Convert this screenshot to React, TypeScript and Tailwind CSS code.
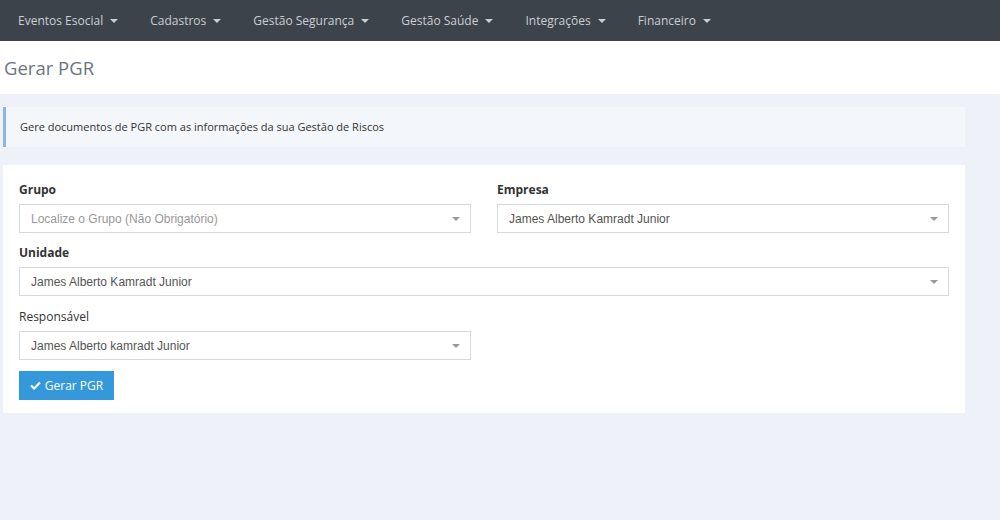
const menus = [
  'Eventos Esocial',
  'Cadastros',
  'Gestão Segurança',
  'Gestão Saúde',
  'Integrações',
  'Financeiro',
]

function Caret() {
  return (
    <span className="inline-block ml-[7px] w-0 h-0 border-l-[4px] border-r-[4px] border-t-[4px] border-l-transparent border-r-transparent border-t-[#c9ced4] align-middle" />
  )
}

function SelectBox({ value, placeholder }: { value?: string; placeholder?: string }) {
  return (
    <div className="flex items-center justify-between h-[29px] border border-[#d5d9de] bg-white pl-[11px] pr-[10px] font-['Liberation_Sans',Arial,sans-serif] text-[12px]">
      <span className={value ? 'text-[#555]' : 'text-[#999]'}>{value ?? placeholder}</span>
      <span className="w-0 h-0 border-l-[4px] border-r-[4px] border-t-[4px] border-l-transparent border-r-transparent border-t-[#999]" />
    </div>
  )
}

function Field({
  label,
  bold = true,
  children,
}: {
  label: string
  bold?: boolean
  children: React.ReactNode
}) {
  return (
    <div>
      <div className={`text-[12px] text-[#333] mb-[5px] leading-[18px] ${bold ? 'font-bold' : 'font-normal'}`}>
        {label}
      </div>
      {children}
    </div>
  )
}

export default function App() {
  return (
    <div className="w-[1000px] h-[520px] overflow-hidden bg-[#eef2f8] font-['Open_Sans',sans-serif]">
      <nav className="h-[41px] bg-[#3d434b] flex items-center pl-[18px] text-[12px] text-[#c9ced4]">
        {menus.map((m, i) => (
          <div key={m} className={`flex items-center ${i < menus.length - 1 ? 'mr-[32px]' : ''}`}>
            {m}
            <Caret />
          </div>
        ))}
      </nav>

      <div className="h-[53px] bg-white flex items-center pl-[4px]">
        <h1 className="text-[18.5px] text-[#6b7580] font-normal">Gerar PGR</h1>
      </div>

      <div className="pl-[3px] pr-[35px] pt-[13px]">
        <div className="h-[40px] flex items-center bg-[#f3f6fa] border-l-[3px] border-[#8bb6e0] pl-[14px] text-[11px] text-[#333]">
          Gere documentos de PGR com as informações da sua Gestão de Riscos
        </div>

        <div className="mt-[18px] bg-white pl-[16px] pr-[16px] pt-[16px] pb-[13px]">
          <div className="grid grid-cols-2 gap-x-[26px]">
            <Field label="Grupo">
              <SelectBox placeholder="Localize o Grupo (Não Obrigatório)" />
            </Field>
            <Field label="Empresa">
              <SelectBox value="James Alberto Kamradt Junior" />
            </Field>
          </div>
          <div className="mt-[11px]">
            <Field label="Unidade">
              <SelectBox value="James Alberto Kamradt Junior" />
            </Field>
          </div>
          <div className="mt-[12px] grid grid-cols-2 gap-x-[26px]">
            <Field label="Responsável" bold={false}>
              <SelectBox value="James Alberto kamradt Junior" />
            </Field>
          </div>
          <button
            type="button"
            className="mt-[11px] h-[29px] w-[95px] flex items-center justify-center gap-[4px] bg-[#3498db] text-white text-[12px]"
          >
            <svg width="11" height="10" viewBox="0 0 12 10" fill="white">
              <path d="M0.3 5.2 L2 3.5 L4.5 6 L10 0.4 L11.7 2.1 L4.5 9.3 Z" />
            </svg>
            Gerar PGR
          </button>
        </div>
      </div>
    </div>
  )
}
